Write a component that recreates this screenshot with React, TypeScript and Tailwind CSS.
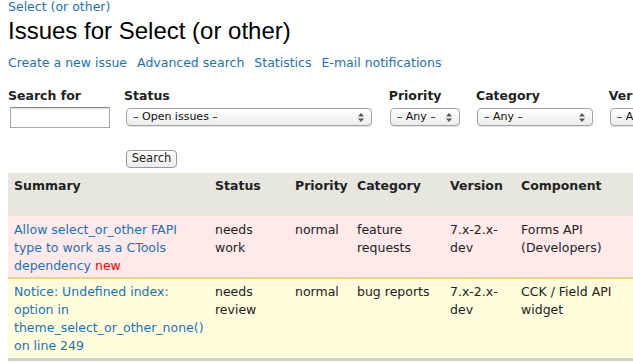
import React from "react";

const body = { fontFamily: '"DejaVu Sans", "Lucida Grande", sans-serif' };

function Arrows() {
  return (
    <svg width="6" height="9" viewBox="0 0 6 9" className="shrink-0">
      <path d="M3 0 L6 3.5 L0 3.5 Z" fill="#555" />
      <path d="M3 9 L6 5.5 L0 5.5 Z" fill="#555" />
    </svg>
  );
}

function Sel({ w, text }: { w: string; text: string }) {
  return (
    <div
      className={`${w} h-[18px] flex items-center justify-between pl-[6px] pr-[7px] rounded-[4px] border border-[#a3a3a3] bg-gradient-to-b from-white to-[#ececec] text-[11px] text-[#111] shadow-[0_1px_0_#e5e5e5]`}
    >
      <span>{text}</span>
      <Arrows />
    </div>
  );
}

const cols = "grid grid-cols-[201px_80px_62px_93px_71px_1fr]";

export default function App() {
  return (
    <div className="w-[633px] h-[363px] overflow-hidden bg-white text-[#222]" style={body}>
      <div className="pl-2">
        <div className="text-[12.5px] leading-[14px] text-[#1a73b8]">
          Select (or other)
        </div>
        <h1
          className="text-[24px] leading-[28px] mt-[3px] text-black"
          style={{ fontFamily: '"Liberation Sans", Arial, sans-serif' }}
        >
          Issues for Select (or other)
        </h1>
        <div className="flex gap-[10px] text-[12.5px] leading-[18px] text-[#1a73b8] mt-[9px]">
          <span>Create a new issue</span>
          <span>Advanced search</span>
          <span>Statistics</span>
          <span>E-mail notifications</span>
        </div>

        <div className="flex mt-[16px] w-[700px]">
          <div className="w-[117px]">
            <div className="text-[12.5px] font-bold leading-[16px]">Search for</div>
            <div className="ml-[2px] mt-[3px] w-[100px] h-[21px] border border-[#aaa] border-t-[#888] bg-white shadow-[inset_0_1px_1px_#ddd]" />
          </div>
          <div className="w-[267px]">
            <div className="text-[12.5px] font-bold leading-[16px]">Status</div>
            <div className="ml-[2px] mt-[4px]">
              <Sel w="w-[246px]" text="– Open issues –" />
            </div>
            <div className="ml-[2px] mt-[24px] w-[51px] h-[18px] rounded-[4px] border border-[#999] bg-gradient-to-b from-white to-[#ececec] text-[11.5px] flex items-center justify-center">
              Search
            </div>
          </div>
          <div className="w-[88px]">
            <div className="text-[12.5px] font-bold leading-[16px]">Priority</div>
            <div className="ml-[1px] mt-[4px]">
              <Sel w="w-[70px]" text="– Any –" />
            </div>
          </div>
          <div className="w-[134px]">
            <div className="text-[12.5px] font-bold leading-[16px]">Category</div>
            <div className="ml-[1px] mt-[4px]">
              <Sel w="w-[116px]" text="– Any –" />
            </div>
          </div>
          <div className="w-[100px]">
            <div className="text-[12.5px] font-bold leading-[16px]">Version</div>
            <div className="ml-[1px] mt-[4px]">
              <Sel w="w-[80px]" text="– Any –" />
            </div>
          </div>
        </div>

        <div className="mt-[5px] w-[625px] text-[12.5px] leading-[18px]">
          <div className={`${cols} h-[42px] bg-[#e8e7df] font-bold pt-[4px]`}>
            <div className="pl-[6px]">Summary</div>
            <div className="pl-[6px]">Status</div>
            <div className="pl-[6px]">Priority</div>
            <div className="pl-[6px]">Category</div>
            <div className="pl-[6px]">Version</div>
            <div className="pl-[6px]">Component</div>
          </div>
          <div className={`${cols} h-[62px] bg-[#ffe9e9] border-t border-[#fdd8cf] pt-[5px]`}>
            <div className="pl-[6px] pr-2 text-[#1a73b8]">
              Allow select_or_other FAPI type to work as a CTools dependency{" "}
              <span className="text-[#f00]">new</span>
            </div>
            <div className="pl-[6px] w-[60px]">needs work</div>
            <div className="pl-[6px]">normal</div>
            <div className="pl-[6px] w-[80px]">feature requests</div>
            <div className="pl-[6px] w-[60px]">7.x-2.x-dev</div>
            <div className="pl-[6px]">Forms API (Developers)</div>
          </div>
          <div className={`${cols} h-[84px] bg-[#fffddc] border-t-2 border-[#f7cf86] border-b-[3px] border-b-[#cfcfcf] pt-[4px]`}>
            <div className="pl-[6px] pr-2 text-[#1a73b8]">
              Notice: Undefined index: option in theme_select_or_other_none() on line 249
            </div>
            <div className="pl-[6px] w-[60px]">needs review</div>
            <div className="pl-[6px]">normal</div>
            <div className="pl-[6px]">bug reports</div>
            <div className="pl-[6px] w-[60px]">7.x-2.x-dev</div>
            <div className="pl-[6px] w-[110px]">CCK / Field API widget</div>
          </div>
        </div>
      </div>
    </div>
  );
}
